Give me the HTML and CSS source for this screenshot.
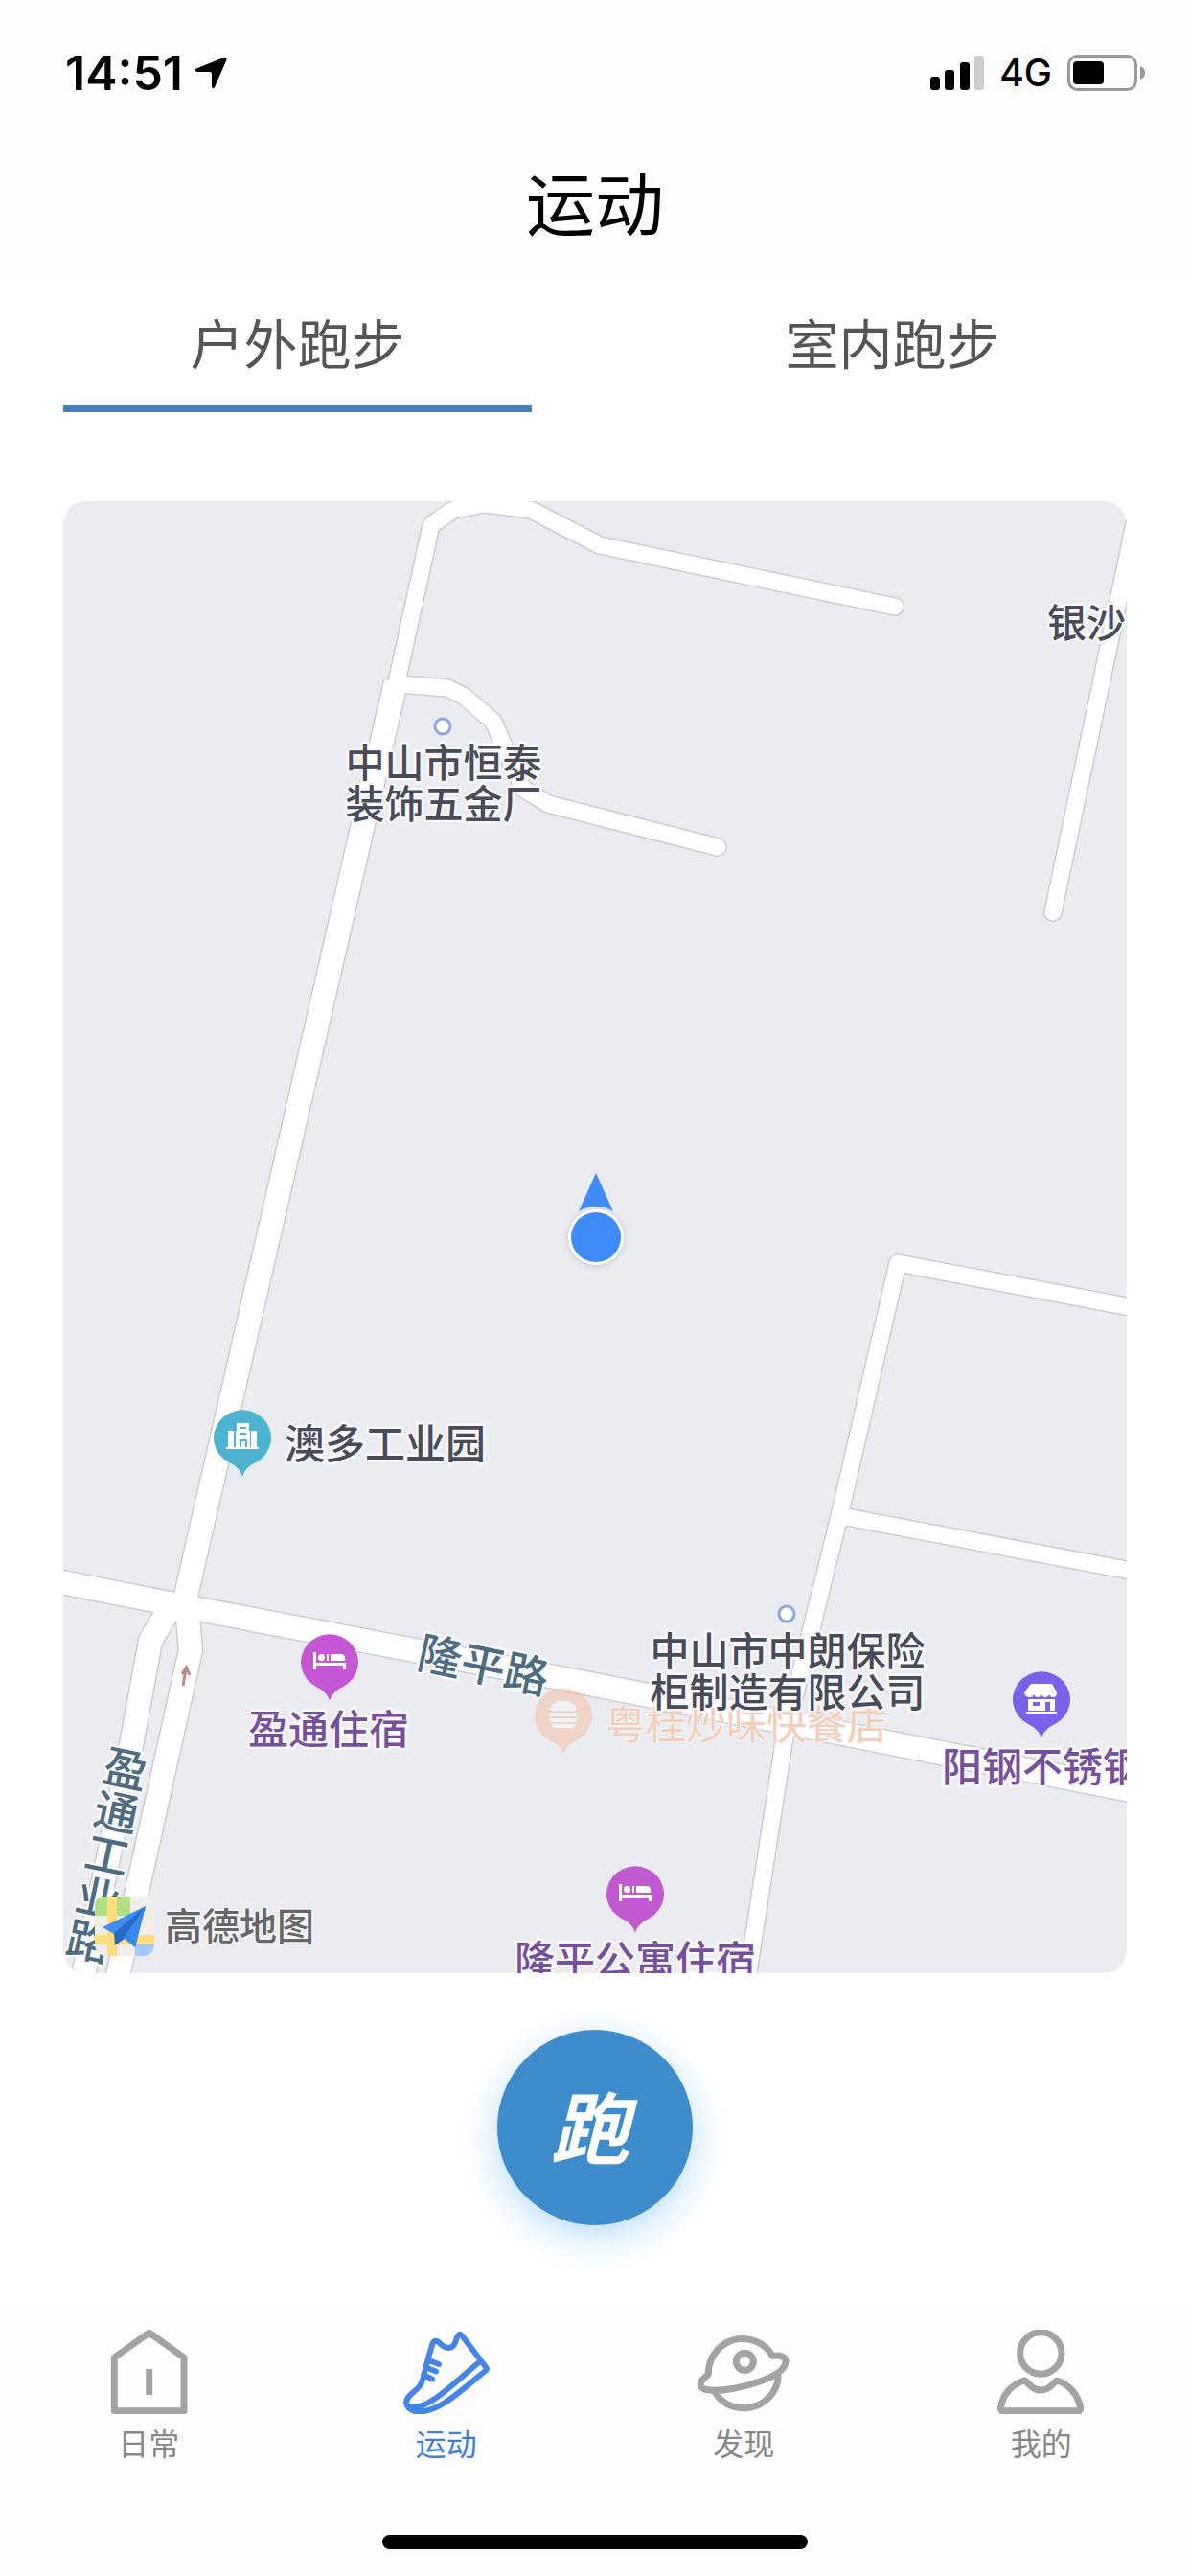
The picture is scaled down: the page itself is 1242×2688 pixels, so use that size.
FILE: index.html
```html
<!DOCTYPE html>
<html lang="zh-CN">
<head>
<meta charset="utf-8">
<meta name="viewport" content="width=device-width, initial-scale=1">
<title>运动</title>
<link rel="stylesheet" href="styles.css">
</head>
<body>
<header class="header">
  <div class="status">
    <div class="status-group">
      <span class="clock">14:51</span>
      <svg class="location" viewBox="0 0 34 34" width="34" height="34" aria-hidden="true"><path d="M30.500 1Q34 0 33.500 3.500L21 32Q19.500 35 18 31.500V18Q18 16 16 16H3Q-1 15 2 12.500Z"/></svg>
    </div>
    <div class="status-group">
      <svg viewBox="0 0 56 36" width="56" height="36" aria-hidden="true">
        <rect x="0" y="22" width="10" height="14" rx="3"/><rect x="15" y="15" width="10" height="21" rx="3"/><rect x="31" y="7" width="10" height="29" rx="3"/><rect x="46" y="0" width="10" height="36" rx="3" fill="#ccc"/>
      </svg>
      <span class="network">4G</span>
      <svg viewBox="0 0 82 38" width="82" height="38" aria-hidden="true">
        <rect x="1.500" y="1.500" width="70" height="35" rx="9" fill="none" stroke="#999" stroke-width="3"/>
        <rect x="6" y="7" width="32" height="24" rx="4"/><path d="M76 12q5 2 5 7t-5 7z" fill="#999"/>
      </svg>
    </div>
  </div>
  <h1 class="title">运动</h1>
</header>

<main class="main">
  <div class="tabs" role="tablist">
    <button class="tab tab-active" type="button" role="tab" aria-selected="true">户外跑步</button>
    <button class="tab" type="button" role="tab" aria-selected="false">室内跑步</button>
  </div>

  <svg class="map" viewBox="66 523 1110 1536" preserveAspectRatio="xMidYMid slice" role="img" aria-label="地图">
    <defs>
      <path id="pin" d="M0 42C-2 35-6 31-14 27A30 29 0 1 1 14 27C6 31 2 35 0 42Z"/>
      <g id="bed" fill="#fff"><path d="M-17-9h3V2h31v7h-3V5h-28v4h-3z"/><circle cx="-8.500" cy="-3.500" r="3.500"/><path d="M-3-7h2v7h-2zM1-7h11q4 0 4 4v3H1z"/></g>
      <g id="roads">
        <path class="lane" d="M414 712L450 548 473 532 506 526 554 532 626 569 934 633M418 714L467 718 485 727 515 753 530 788 546 823 572 839 749 884M1189 523L1099 952M1180 1364L937 1318 876 1582 819 1812 780 2064M878 1582L1180 1639"/>
        <path class="street" d="M413 712L255 1400 194 1665M60 1650L207 1679 600 1754 1180 1868M182 1670L157 1712 137 1821 110 1953 86 2066M194 1665L199 1722 186 1780 142 1978 122 2066"/>
      </g>
    </defs>
    <rect class="land" x="66" y="523" width="1110" height="1536"/>
    <use class="road-edge" href="#roads"/>
    <use class="road-fill" href="#roads"/>
    <path d="M191 1759L194 1742M190 1747L194.500 1740 198 1748" fill="none" stroke="#b98b85" stroke-width="3"/>

    <g class="road-name">
      <text text-anchor="middle" transform="translate(501 1754) rotate(12)">隆平路</text>
      <text class="upright" transform="translate(136 1823) rotate(12)">盈通工业路</text>
    </g>

    <g opacity=".34">
      <g transform="translate(588 1789)"><use href="#pin" fill="#f7a877"/><path fill="#fff" d="M-14-4q1-10 14-10t14 10zM-14-2h28v4h-28zM-14 4h28v4h-28zM-13 10h26q-1 4-5 4H-8q-4 0-5-4z"/></g>
    </g>
    <text class="place food" x="632" y="1815">粤桂炒味快餐店</text>

    <g class="dot"><circle cx="462" cy="758" r="8"/><circle cx="821" cy="1684" r="8"/></g>
    <g class="company">
      <text x="463" y="811">中山市恒泰</text>
      <text x="463" y="854">装饰五金厂</text>
      <text x="822" y="1738">中山市中朗保险</text>
      <text x="822" y="1781">柜制造有限公司</text>
      <text x="1134" y="665">银沙</text>
    </g>

    <g transform="translate(253 1499)"><use href="#pin" fill="#4cb4d0"/><path fill="#fff" fill-rule="evenodd" d="M-6-14H7V-6H8H15V11H17V13H-17V11H-15V-6H-6ZM-3-10V-8H4V-10ZM-3-4V-2H4V-4ZM-3 3V11H-1V5H3V11H5V3ZM-9-6h2v17h-2zM8-6h1v17h-1z"/></g>
    <text class="place" x="297" y="1522">澳多工业园</text>

    <g transform="translate(344 1733)"><use href="#pin" fill="#c557d4"/><use href="#bed"/></g>
    <text class="place hotel" x="343" y="1820">盈通住宿</text>
    <g transform="translate(663 1975)"><use href="#pin" fill="#c15ad0"/><use href="#bed"/></g>
    <text class="place hotel" x="663" y="2061">隆平公寓住宿</text>
    <g transform="translate(1087 1772)"><use href="#pin" fill="#7b61e8"/><path fill="#fff" fill-rule="evenodd" d="M-11-15h22l5 9q0 5-4 5-3 0-4-3-1 3-4 3t-4-3q-1 3-4 3t-4-3q-1 3-4 3-5 0-6-5zM-14 1h28v12h-28zM-9 4v4h7V4zM4 4v9h5V4zM-16 14h32v2h-32z"/></g>
    <text class="place hotel" x="1088" y="1859">阳钢不锈钢</text>

    <g class="me">
      <path d="M622 1224L640 1264Q622 1254 604 1264Z"/>
      <circle class="me-halo" cx="622" cy="1291" r="29"/>
      <circle cx="622" cy="1291" r="26"/>
    </g>

    <g transform="translate(99 1979)">
      <rect width="62" height="62" rx="12" fill="#f0eee9"/>
      <path d="M10 0H37V20H0V10Q0 0 10 0Z" fill="#b3df84"/>
      <path d="M42 48H62Q62 62 50 62H42Z" fill="#a3c8fb"/>
      <path d="M13 0H23V40H62V50H23V62H13V50H0V40H13Z" fill="#ffdd7c"/>
      <path d="M53 10L8 32 20 39 31 44 42 53Z" fill="#3b8ff7"/><path d="M53 10L20 38 21 51 31 44Z" fill="#2869c4"/><path d="M53 10L30 43 42 53Z" fill="#3988f2"/>
    </g>
    <text class="brand" x="172" y="2024">高德地图</text>
  </svg>

  <button class="run" type="button">跑</button>
</main>

<footer class="footer">
  <nav class="nav">
    <a class="nav-item" href="#daily">
      <svg class="icon" viewBox="0 0 96 88" aria-hidden="true"><path d="M48.700 3.200L85 29V84.700H12.300V29Z"/><path class="butt" d="M48.700 41V68"/></svg>
      <span>日常</span>
    </a>
    <a class="nav-item nav-active" href="#sport" aria-current="page">
      <svg class="icon icon-thin" viewBox="0 0 96 88" aria-hidden="true"><path d="M64 6Q61 3 59 8C57 15 55 19 50 19C44 19 42 14 38 12Q34 11 33 16L27 37C24 47 24 55 19 60C12 67 6 70 6 76Q8 85 20 85.500C42 84 59 67 89 42.500Q91 41 89 39ZM82 34C60 52 46 67 31 75Q20 82 10 80M29 32L40 36M27 39.500L37 43.500M24 47L33 51.500"/></svg>
      <span>运动</span>
    </a>
    <a class="nav-item" href="#discover">
      <svg class="icon" viewBox="0 0 96 88" aria-hidden="true"><path d="M11.300 46A36 36 0 0 1 78.500 27.500C85 26 92 28 92 33C92 42 79 49 65 54C49 60 28 64 14 63C4 63 1 58 4 54C6 50 10 49 11.300 46ZM18 65C30 85 59 88 76 69Q84 60 84 49"/><circle cx="49.300" cy="33.300" r="9"/></svg>
      <span>发现</span>
    </a>
    <a class="nav-item" href="#me">
      <svg class="icon" viewBox="0 0 96 88" aria-hidden="true"><circle cx="47.300" cy="24.500" r="21.700"/><path d="M30 53C17 57 7 68 5.600 81Q5 84.700 8 84.700H86Q89 84.700 88.600 81C86 68 77 57 64 53C61 54 58 63 47.300 63S34 54 30 53Z"/></svg>
      <span>我的</span>
    </a>
  </nav>
  <div class="home-bar"></div>
</footer>
</body>
</html>
```
FILE: styles.css
```css
* { box-sizing: border-box; }

body {
  margin: 0;
  min-height: 100vh;
  display: flex;
  flex-direction: column;
  background: #fff;
  color: #000;
  font-family: "Noto Sans CJK SC", "Noto Sans", sans-serif;
}

button {
  border: 0;
  padding: 0;
  background: none;
  font: inherit;
}

svg { display: block; flex: none; }

.header { background: #fdfdfd; padding-bottom: 26px; }

.status {
  height: 152px;
  padding: 0 46px 0 68px;
  display: flex;
  align-items: center;
  justify-content: space-between;
  font-family: Inter, "Liberation Sans", sans-serif;
}

.status-group { display: flex; align-items: center; gap: 16px; }
.clock { font-size: 50px; font-weight: 600; line-height: 56px; }
.network { font-size: 39px; font-weight: 500; line-height: 48px; }
.location { margin-left: -4px; }

.title {
  margin: 0;
  font-size: 72px;
  font-weight: 400;
  line-height: 114px;
  text-align: center;
}

.main {
  padding: 0 66px;
  display: flex;
  flex-direction: column;
  align-items: center;
}

.tabs {
  width: 100%;
  display: grid;
  grid-template-columns: 1fr 1fr;
  gap: 132px;
}

.tab {
  padding: 24px 0 27px;
  border-bottom: 7px solid transparent;
  color: #555;
  font-size: 56px;
  line-height: 80px;
}

.tab-active { border-color: #4680b9; }

.map {
  width: 100%;
  height: auto;
  margin-top: 93px;
  border-radius: 24px;
  overflow: hidden;
}

.land { fill: #ebecf1; }

/* The road shapes are drawn twice: a wider edge, then the white surface. */
.road-edge { stroke: #cdccd1; --lane: 20px; --street: 27px; }
.road-fill { stroke: #fff; --lane: 17px; --street: 24px; }
.lane, .street { fill: none; stroke-linejoin: round; }
.lane { stroke-linecap: round; stroke-width: var(--lane); }
.street { stroke-width: var(--street); }

.map text {
  stroke: #f8f8fb;
  stroke-width: 5px;
  stroke-linejoin: round;
  paint-order: stroke;
}

.road-name { fill: #4d6c80; font-size: 46px; font-weight: 500; }
.upright { writing-mode: vertical-rl; }
.company { fill: #484b59; font-size: 41px; font-weight: 500; text-anchor: middle; }
.place { fill: #484b59; font-size: 42px; font-weight: 500; }
.hotel { fill: #76509a; text-anchor: middle; }
.map .food { fill: #f5cdb9; stroke-width: 2px; font-weight: 400; }
.map .brand { fill: #666; font-size: 39px; font-weight: 500; stroke-width: 3px; }
.dot { fill: #fff; stroke: #8fa6e4; stroke-width: 3px; }
.me { fill: #3f8cf8; }
.me-halo { fill: #fff; filter: drop-shadow(0 1px 3px #c4c6cd); }

.run {
  width: 204px;
  height: 204px;
  margin: 59px 0 92px;
  padding: 0 10px 6px 0;
  border-radius: 50%;
  background: #3f8ccc;
  box-shadow: 0 12px 40px #b9ddfa;
  color: #fff;
  font-size: 82px;
  font-style: italic;
  font-weight: 700;
  line-height: 1;
}

.footer {
  margin-top: auto;
  padding: 17px 0 28px;
  background: #fdfdfd;
}

.nav { display: grid; grid-template-columns: repeat(4, 1fr); }

.nav-item {
  display: flex;
  flex-direction: column;
  align-items: center;
  gap: 9px;
  color: #888;
  font-size: 32px;
  line-height: 40px;
  text-decoration: none;
}

.icon {
  width: 96px;
  height: 88px;
  fill: none;
  stroke: #a3a3a3;
  stroke-width: 7px;
  stroke-linecap: round;
  stroke-linejoin: round;
}

.icon-thin { stroke-width: 6px; }
.butt { stroke-linecap: butt; }
.nav-active { color: #3e7fdc; }
.nav-active .icon { stroke: #4585e5; }

.home-bar {
  width: 444px;
  height: 15px;
  margin: 77px auto 0;
  border-radius: 8px;
  background: #000;
}
```
